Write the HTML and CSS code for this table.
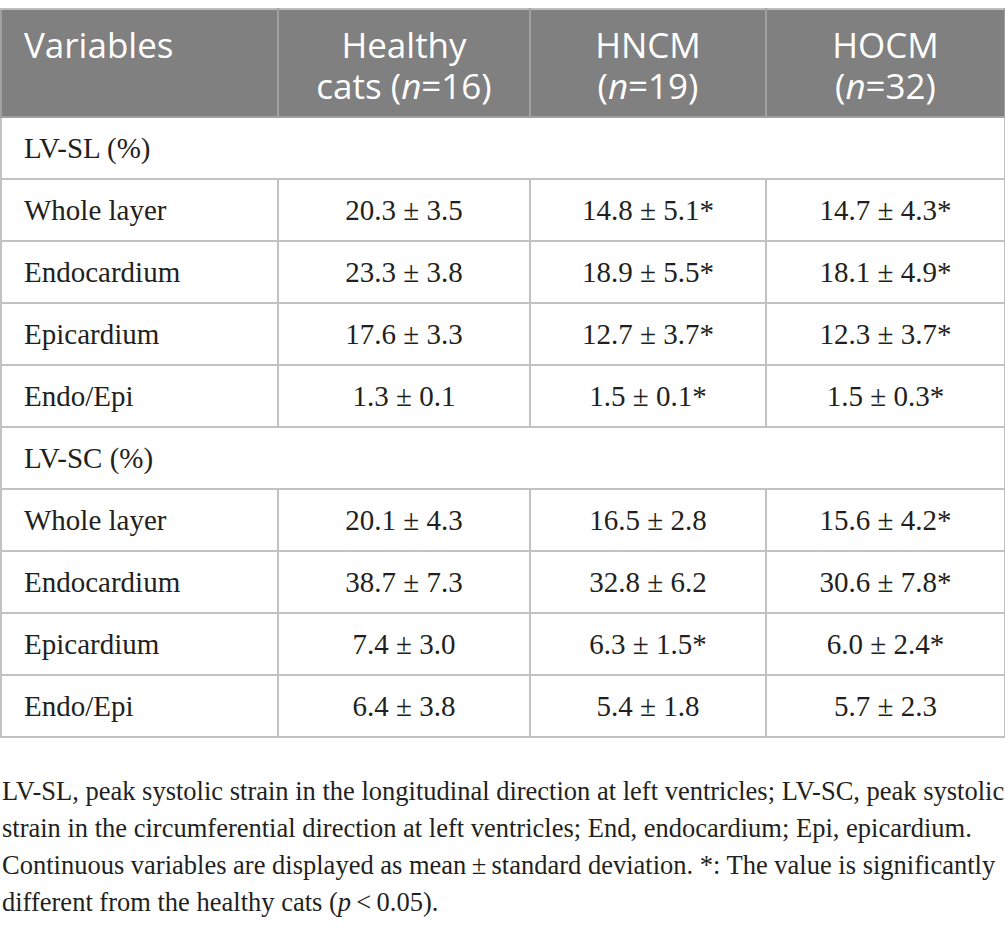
FILE: index.html
```html
<!DOCTYPE html>
<html>
<head>
<meta charset="utf-8">
<link rel="stylesheet" href="styles.css">
</head>
<body>
<table class="data">
  <colgroup>
    <col class="c1"><col class="c2"><col class="c3"><col class="c4">
  </colgroup>
  <thead>
    <tr>
      <th class="left">Variables</th>
      <th>Healthy<br>cats (<i>n</i>=16)</th>
      <th>HNCM<br>(<i>n</i>=19)</th>
      <th>HOCM<br>(<i>n</i>=32)</th>
    </tr>
  </thead>
  <tbody>
    <tr class="group"><td colspan="4">LV-SL (%)</td></tr>
    <tr><td>Whole layer</td><td>20.3 ± 3.5</td><td>14.8 ± 5.1*</td><td>14.7 ± 4.3*</td></tr>
    <tr><td>Endocardium</td><td>23.3 ± 3.8</td><td>18.9 ± 5.5*</td><td>18.1 ± 4.9*</td></tr>
    <tr><td>Epicardium</td><td>17.6 ± 3.3</td><td>12.7 ± 3.7*</td><td>12.3 ± 3.7*</td></tr>
    <tr><td>Endo/Epi</td><td>1.3 ± 0.1</td><td>1.5 ± 0.1*</td><td>1.5 ± 0.3*</td></tr>
    <tr class="group"><td colspan="4">LV-SC (%)</td></tr>
    <tr><td>Whole layer</td><td>20.1 ± 4.3</td><td>16.5 ± 2.8</td><td>15.6 ± 4.2*</td></tr>
    <tr><td>Endocardium</td><td>38.7 ± 7.3</td><td>32.8 ± 6.2</td><td>30.6 ± 7.8*</td></tr>
    <tr><td>Epicardium</td><td>7.4 ± 3.0</td><td>6.3 ± 1.5*</td><td>6.0 ± 2.4*</td></tr>
    <tr><td>Endo/Epi</td><td>6.4 ± 3.8</td><td>5.4 ± 1.8</td><td>5.7 ± 2.3</td></tr>
  </tbody>
</table>
<p class="note">LV-SL, peak systolic strain in the longitudinal direction at left ventricles; LV-SC, peak systolic<br>strain in the circumferential direction at left ventricles; End, endocardium; Epi, epicardium.<br>Continuous variables are displayed as mean&thinsp;±&thinsp;standard deviation. *: The value is significantly<br>different from the healthy cats (<i>p</i>&thinsp;&lt;&thinsp;0.05).</p>
</body>
</html>
```
FILE: styles.css
```css
html, body {
  margin: 0;
  padding: 0;
  background: #ffffff;
}
body {
  padding-top: 8px;
  color: #231f20;
  font-family: "Liberation Serif", "Times New Roman", serif;
}
.data {
  border-collapse: collapse;
  width: 1004px;
  table-layout: fixed;
}
.c1 { width: 277px; }
.c2 { width: 252px; }
.c3 { width: 236px; }
.c4 { width: 239px; }
.data th {
  background: #7f807f;
  color: #ffffff;
  font-family: "Open Sans", "DejaVu Sans", sans-serif;
  font-weight: 400;
  font-size: 35px;
  line-height: 41px;
  text-align: center;
  vertical-align: top;
  height: 108px;
  padding: 14px 0 0 0;
  box-sizing: border-box;
  border: 2px solid #a0a0a0;
  border-top-color: #bdbdbd;
}
.data th.left {
  text-align: left;
  padding-left: 22px;
}
.data th i { font-style: italic; }
.data td {
  height: 60px;
  padding: 0;
  font-size: 29px;
  text-align: center;
  vertical-align: middle;
  border: 2px solid #c2c2c2;
}
.data td:first-child {
  text-align: left;
  padding-left: 22px;
}
.note {
  margin: 35px 0 0 2px;
  font-size: 26.5px;
  line-height: 37px;
  white-space: nowrap;
}
```
